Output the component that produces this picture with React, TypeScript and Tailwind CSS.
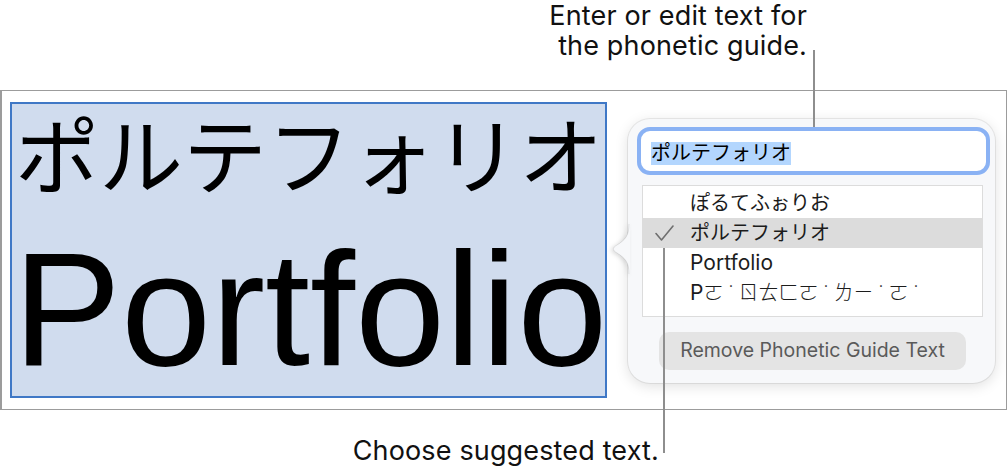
import React from "react";

function Check() {
  return (
    <svg width="19" height="16" viewBox="0 0 19 16" fill="none">
      <path d="M1 8.5 L6.5 15 L18 1" stroke="#6f6f6f" strokeWidth="1.6" strokeLinecap="round" strokeLinejoin="round" />
    </svg>
  );
}

function Dot() {
  return <span className="inline-block w-[15px] text-center">˙</span>;
}

export default function App() {
  return (
    <div className="relative w-[1008px] h-[471px] overflow-hidden bg-white text-black font-['Inter','Noto_Sans_CJK_JP',sans-serif]">
      {/* top callout */}
      <div className="h-[90px] flex justify-end pr-[201px] pt-[1px]">
        <div className="text-right text-[27px] tracking-[0.15px] leading-[30px] text-[#111]">
          Enter or edit text for
          <br />
          the phonetic guide.
        </div>
      </div>

      {/* framed area */}
      <div className="w-[1007px] h-[320px] border border-l-2 border-[#9c9c9c] flex items-start">
        <div className="ml-[8px] mt-[11px] w-[597px] h-[296px] border-2 border-[#3f78c6] bg-[#d0dcee] flex flex-col">
          <div className="font-['Noto_Sans_CJK_JP',sans-serif] text-[84px] leading-none pl-[3px] mt-[6px] whitespace-nowrap">
            ポルテフォリオ
          </div>
          <div className="font-['Liberation_Sans',Arial,sans-serif] text-[162px] leading-none ml-[1px] mt-[34px] whitespace-nowrap">
            Portfolio
          </div>
        </div>

        {/* popover */}
        <div className="relative ml-[21px] mt-[28px] w-[367px] h-[264px] rounded-[22px] bg-[#f7f8fa] shadow-[0_3px_14px_rgba(0,0,0,0.13),0_0_0_1px_rgba(0,0,0,0.07)] flex flex-col pt-[8px]">
          <svg
            className="absolute left-[-17px] top-[105px] drop-shadow-[-2px_1px_2px_rgba(0,0,0,0.14)]"
            width="19"
            height="50"
            viewBox="0 0 19 50"
          >
            <path d="M18 0 C18 12 14 16 6 21 C1 24 1 26 6 29 C14 34 18 38 18 50 L19 50 L19 0 Z" fill="#f7f8fa" />
            <path d="M18 0 C18 12 14 16 6 21 C1 24 1 26 6 29 C14 34 18 38 18 50" fill="none" stroke="rgba(0,0,0,0.09)" strokeWidth="1" />
          </svg>

          {/* input */}
          <div className="ml-[9px] w-[353px] h-[48px] rounded-[13px] border-4 border-[#8ab2f4] bg-white pl-[10px] pt-[11px]">
            <span className="inline-block h-[23px] leading-[23px] text-[20px] bg-[#b3d6fe] text-black">
              ポルテフォリオ
            </span>
          </div>

          {/* list */}
          <div className="mt-[10px] ml-[14px] w-[341px] h-[132px] border border-[#dcdcdc] bg-white pt-[2px] text-[20px] text-[#1c1c1c]">
            <div className="h-[30px] flex items-center">
              <div className="w-[47px]" />
              <span>ぽるてふぉりお</span>
            </div>
            <div className="h-[30px] flex items-center bg-[#dcdcdc]">
              <div className="w-[47px] pl-[12px] flex items-center">
                <Check />
              </div>
              <span>ポルテフォリオ</span>
            </div>
            <div className="h-[30px] flex items-center">
              <div className="w-[47px]" />
              <span className="text-[21px]">Portfolio</span>
            </div>
            <div className="h-[30px] flex items-center">
              <div className="w-[47px]" />
              <span className="whitespace-nowrap font-['Inter','Noto_Sans_CJK_TC',sans-serif] font-light">
                <span className="text-[21px] font-normal">P</span>ㄛ<Dot />ㄖㄊㄈㄛ<Dot />ㄌㄧ<Dot />ㄛ<Dot />
              </span>
            </div>
          </div>

          {/* button */}
          <div className="mt-[15px] ml-[31px] w-[307px] h-[38px] rounded-[10px] bg-[#e4e4e4] flex items-center justify-center text-[19.5px] text-[#5a5a5a]">
            Remove Phonetic Guide Text
          </div>
        </div>
      </div>

      {/* bottom callout */}
      <div className="flex justify-end pr-[349px] mt-[26px]">
        <div className="text-[27px] tracking-[0.15px] leading-[30px] text-[#111]">Choose suggested text.</div>
      </div>

      {/* leader lines */}
      <div className="absolute left-[813px] top-[50px] w-[2px] h-[77px] bg-[#8e8e8e]" />
      <div className="absolute left-[663px] top-[248px] w-[2px] h-[205px] bg-[#8e8e8e]" />
    </div>
  );
}
